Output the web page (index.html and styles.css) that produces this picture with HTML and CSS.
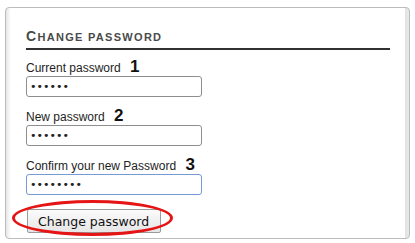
FILE: index.html
```html
<!DOCTYPE html>
<html>
<head>
<meta charset="utf-8">
<link rel="stylesheet" href="styles.css">
</head>
<body>
<div class="panel">
  <h2 class="heading">Change password</h2>
  <div class="field">
    <label class="label">Current password <span class="num">1</span></label>
    <input class="input" type="password" value="abcdef">
  </div>
  <div class="field">
    <label class="label">New password <span class="num">2</span></label>
    <input class="input" type="password" value="abcdef">
  </div>
  <div class="field">
    <label class="label">Confirm your new Password <span class="num">3</span></label>
    <input class="input input-focus" type="password" value="abcdefgh">
  </div>
  <div class="actions">
    <button class="button" type="button">Change password</button>
    <div class="ring"></div>
  </div>
</div>
</body>
</html>
```
FILE: styles.css
```css
html, body {
  margin: 0;
  padding: 0;
  background: #fff;
}
body {
  font-family: "Liberation Sans", Arial, sans-serif;
  color: #222;
  width: 415px;
  height: 243px;
  overflow: hidden;
}
.panel {
  box-sizing: border-box;
  margin: 7px 0 0 5px;
  width: 405px;
  height: 232px;
  border: 1px solid #bcbcbc;
  border-radius: 4px;
  padding: 20px 19px 0 20px;
  background: linear-gradient(to right, #e6e6e6 0, #f6f6f6 3px, #fff 5px, #fff calc(100% - 4px), #e2e2e2 calc(100% - 4px), #e9e9e9 100%);
}
.heading {
  margin: 0;
  font-size: 11px;
  line-height: 16px;
  font-weight: bold;
  text-transform: uppercase;
  letter-spacing: 1.3px;
  color: #4a4a4a;
  padding-bottom: 3px;
  border-bottom: 2px solid #2f3133;
}
.heading::first-letter {
  font-size: 14px;
}
.field {
  margin-top: 10px;
}
.field + .field {
  margin-top: 12px;
}
.label {
  display: block;
  font-size: 12px;
  line-height: 16px;
  color: #1e1e1e;
}
.num {
  font-size: 17px;
  line-height: 12px;
  font-weight: bold;
  color: #111;
  margin-left: 6px;
}
.input {
  display: block;
  box-sizing: border-box;
  width: 176px;
  height: 21px;
  margin: 0;
  padding: 0 3px;
  border: 1px solid #8e8e8e;
  border-radius: 3px;
  background: #fff;
  font-family: "DejaVu Sans", sans-serif;
  font-size: 11px;
  color: #222;
  outline: none;
}
.input-focus {
  border-color: #769ad6;
}
.actions {
  position: relative;
  margin-top: 14px;
  padding-left: 1px;
}
.button {
  display: block;
  box-sizing: border-box;
  height: 24px;
  margin: 0;
  padding: 0 11px 0 10px;
  border: 1px solid #9a9a9a;
  border-radius: 2px;
  background: linear-gradient(to bottom, #fbfbfb, #e6e6e6);
  font-family: "DejaVu Sans", sans-serif;
  font-size: 12.5px;
  color: #111;
}
.ring {
  position: absolute;
  left: -14px;
  top: -9px;
  width: 161px;
  height: 36px;
  box-sizing: border-box;
  border: 3px solid #e51515;
  border-radius: 50%;
}
```
